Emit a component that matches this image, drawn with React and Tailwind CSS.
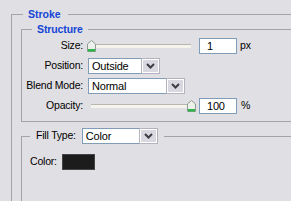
const LINE = 'border-[#a4a3a9]'

function Chevron() {
  return (
    <svg width="9" height="6" viewBox="0 0 9 6" aria-hidden="true">
      <path d="M1 1 L4.5 4.5 L8 1" fill="none" stroke="#3c3c44" strokeWidth="2" />
    </svg>
  )
}

function Dropdown({ value, width }) {
  return (
    <div className={`flex h-[16px] ${width} border border-[#7f9db9] bg-white`}>
      <span className="flex-1 pl-[3px] text-[11px] leading-[14px] text-black">{value}</span>
      <span className="flex w-[17px] items-center justify-center border border-white bg-[#d9d8e0] outline outline-1 outline-[#b4b3bd]">
        <Chevron />
      </span>
    </div>
  )
}

function Thumb() {
  return (
    <svg width="9" height="12" viewBox="0 0 9 12" aria-hidden="true">
      <path d="M0.5 11.5 V4 L4.5 0.5 L8.5 4 V11.5 Z" fill="#eef0ec" stroke="#8d9a8f" />
      <rect x="1" y="9" width="7" height="2.5" fill="#2fb64a" />
    </svg>
  )
}

function Slider({ value }) {
  return (
    <div className="relative h-[16px] w-[110px]">
      <div className="absolute left-[4px] right-[6px] top-[6px] h-[4px] border-t border-[#b7b6b0] bg-[#f5f4ec]" />
      <div
        className="absolute top-[2px]"
        style={{ left: `${Math.round((value / 100) * 100)}px` }}
      >
        <Thumb />
      </div>
    </div>
  )
}

function NumberBox({ value }) {
  return (
    <div className="h-[16px] w-[38px] border border-[#7f9db9] bg-white pl-[7px] text-[11px] leading-[14px] text-black">
      {value}
    </div>
  )
}

function Row({ label, children }) {
  return (
    <div className="flex h-[16px] items-center">
      <div className="flex w-[64px] shrink-0 justify-end pr-[3px]">
        <span className="shrink-0 whitespace-nowrap text-black">{label}</span>
      </div>
      {children}
    </div>
  )
}

export default function App() {
  return (
    <div className="h-[201px] w-[291px] overflow-hidden bg-[#e0dfe3] pt-[8px] font-['Liberation_Sans',sans-serif] text-[10.5px] tracking-[-0.2px]">
      <fieldset className={`ml-[11px] border-l border-t ${LINE} h-[300px]`}>
        <legend className="ml-[11px] pl-[5px] pr-[7px] text-[10.5px] font-bold leading-[13px] tracking-[0px] text-[#1545d6]">
          Stroke
        </legend>

        {/* Structure */}
        <fieldset className={`ml-[9px] mt-[2px] border-b border-l border-t ${LINE} pb-[7px] pt-[2px]`}>
          <legend className="ml-[10px] pl-[5px] pr-[5px] font-bold leading-[13px] tracking-[-0.1px] text-[#1545d6]">
            Structure
          </legend>
          <div className="flex flex-col gap-[4px]">
            <Row label="Size:">
              <div className="ml-[1px]">
                <Slider value={0} />
              </div>
              <div className="ml-[2px]">
                <NumberBox value="1" />
              </div>
              <span className="ml-[3px]">px</span>
            </Row>
            <Row label="Position:">
              <div className="ml-[2px]">
                <Dropdown value="Outside" width="w-[72px]" />
              </div>
            </Row>
            <Row label="Blend Mode:">
              <div className="ml-[2px]">
                <Dropdown value="Normal" width="w-[97px]" />
              </div>
            </Row>
            <Row label="Opacity:">
              <div className="ml-[1px]">
                <Slider value={100} />
              </div>
              <div className="ml-[2px]">
                <NumberBox value="100" />
              </div>
              <span className="ml-[4px]">%</span>
            </Row>
          </div>
        </fieldset>

        {/* Fill Type */}
        <fieldset className={`ml-[9px] mt-[6px] border-l border-t ${LINE} h-[200px]`}>
          <legend className="ml-[8px] pl-[6px] pr-[6px]">
            <div className="flex h-[16px] items-center">
              <span className="mr-[6px] text-black">Fill Type:</span>
              <Dropdown value="Color" width="w-[76px]" />
            </div>
          </legend>
          <div className="flex items-center pl-[8px] pt-[10px]">
            <span className="text-black">Color:</span>
            <div className="ml-[5px] h-[16px] w-[33px] border border-[#444] bg-[#1c1c1c]" />
          </div>
        </fieldset>
      </fieldset>
    </div>
  )
}
